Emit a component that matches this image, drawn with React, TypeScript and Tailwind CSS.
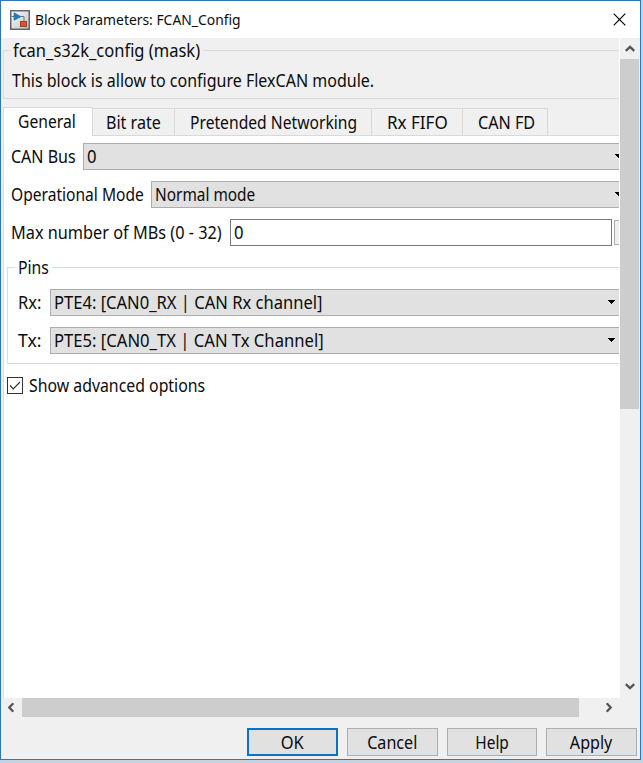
import type { ReactNode } from "react";

function Label({ children, className = "" }: { children: ReactNode; className?: string }) {
  return <span className={`block shrink-0 origin-left whitespace-pre ${className}`}>{children}</span>;
}

function DownArrow() {
  return (
    <svg width="7" height="4" viewBox="0 0 7 4" shapeRendering="crispEdges" className="shrink-0">
      <path d="M0 0h7v1h-1v1h-1v1h-1v1h-1v-1h-1v-1h-1v-1h-1z" fill="#000" />
    </svg>
  );
}

function Combo({ value, className = "", arrow, fit = "" }: { value: string; className?: string; arrow: string; fit?: string }) {
  return (
    <div className={`flex h-[27px] shrink-0 items-start justify-between overflow-hidden border border-r-0 border-[#adadad] bg-[#e1e1e1] pl-[3px] ${className}`}>
      <Label className={`leading-[25px] ${fit}`}>{value}</Label>
      <div className={`mt-[10px] shrink-0 ${arrow}`}>
        <DownArrow />
      </div>
    </div>
  );
}

function Chevron({ className = "" }: { className?: string }) {
  return (
    <svg width="10" height="7" viewBox="0 0 10 7" className={className}>
      <path d="M.8 5.8L5 1.8L9.2 5.8" fill="none" stroke="#555" strokeWidth="2.3" />
    </svg>
  );
}

function Tab({ children, className, fit }: { children: string; className: string; fit: string }) {
  return (
    <div className={`h-[27px] shrink-0 border-t border-r border-[#d9d9d9] bg-[#f0f0f0] leading-[27px] ${className}`}>
      <Label className={fit}>{children}</Label>
    </div>
  );
}

export default function App() {
  return (
    <div className="h-[763px] w-[643px] overflow-hidden bg-[#c3d3e2] font-['Noto_Sans',sans-serif] text-[17.5px] text-[#0c0c0c]">
      <div className="flex h-[760px] w-[641px] flex-col border border-[#2f78b5] bg-[#f0f0f0]">
        <header className="flex h-[37px] shrink-0 items-center bg-white pl-[9px]">
          <svg width="20" height="20" viewBox="0 0 20 20" className="shrink-0">
            <defs>
              <linearGradient id="tile" x1="0" y1="0" x2="1" y2="1">
                <stop offset="0" stopColor="#ffffff" />
                <stop offset="1" stopColor="#bfbfc3" />
              </linearGradient>
            </defs>
            <rect x="0.75" y="0.75" width="18.5" height="18.5" fill="url(#tile)" stroke="#62666c" strokeWidth="1.5" />
            <path d="M1.5 6.5H4M11 6.5H14V12" fill="none" stroke="#777" />
            <path d="M4 2.7L11 6.7L4 10.3Z" fill="#1c82bd" stroke="#2b6f9e" strokeWidth=".7" />
            <rect x="10.5" y="11.5" width="6" height="5" fill="#d9562c" stroke="#9c4228" />
          </svg>
          <Label className="ml-[5px] scale-x-[0.925] text-[15px]">Block Parameters: FCAN_Config</Label>
          <svg width="13" height="13" viewBox="0 0 13 13" className="mr-[14px] ml-auto">
            <path d="M.7 .7L12.3 12.3M12.3 .7L.7 12.3" stroke="#000" strokeWidth="1.15" />
          </svg>
        </header>

        <div className="flex h-[660px] shrink-0">
          <main className="w-[618px] shrink-0 overflow-hidden pl-[2px]">
            <fieldset className="mt-0 h-[61px] w-[640px] border border-[#dcdcdc] pl-[8px]">
              <legend className="ml-[-1px] h-[25px] w-[192px] pl-[2px] leading-[25px]">
                <Label className="scale-x-[0.943]">fcan_s32k_config (mask)</Label>
              </legend>
              <Label className="mt-[5px] scale-x-[0.915] leading-[25px]">This block is allow to configure FlexCAN module.</Label>
            </fieldset>

            <nav className="mt-[8px] flex h-[29px] w-[640px] items-end border-b border-[#d9d9d9]">
              <div className="mb-[-1px] h-[29px] w-[90px] shrink-0 border border-b-0 border-[#d9d9d9] bg-white pl-[14px] leading-[27px]">
                <Label className="scale-x-[0.895]">General</Label>
              </div>
              <Tab className="w-[82px] pl-[13px]" fit="scale-x-[0.92]">Bit rate</Tab>
              <Tab className="w-[197px] pl-[15px]" fit="scale-x-[0.895]">Pretended Networking</Tab>
              <Tab className="w-[91px] pl-[15px]" fit="scale-x-[0.972]">Rx FIFO</Tab>
              <Tab className="w-[85px] pl-[15px]" fit="scale-x-[0.922]">CAN FD</Tab>
            </nav>

            <section className="flex h-[562px] w-[640px] flex-col border-l border-[#dcdcdc] bg-white pt-[7px]">
              <div className="flex h-[38px] shrink-0 pl-[7px]">
                <Label className="w-[72px] scale-x-[0.915] leading-[27px]">CAN Bus</Label>
                <Combo value="0" className="w-[560px]" arrow="mr-[21px]" fit="scale-x-[0.95]" />
              </div>
              <div className="flex h-[38px] shrink-0 pl-[7px]">
                <Label className="w-[140px] scale-x-[0.89] leading-[27px]">Operational Mode</Label>
                <Combo value="Normal mode" className="w-[492px]" arrow="mr-[21px]" fit="scale-x-[0.88]" />
              </div>
              <div className="flex h-[38px] shrink-0 pl-[7px]">
                <Label className="w-[219px] scale-x-[0.93] leading-[27px]">Max number of MBs (0 - 32)</Label>
                <div className="h-[27px] w-[382px] shrink-0 border border-[#7a7a7a] bg-white pl-[3px] leading-[25px]">
                  <Label className="scale-x-[0.95]">0</Label>
                </div>
                <div className="mt-px ml-[2px] h-[25px] w-[24px] shrink-0 border border-[#adadad] bg-[#f0f0f0]" />
              </div>
              <fieldset className="ml-[3px] h-[107px] w-[660px] shrink-0 border border-[#dcdcdc] pl-[10px]">
                <legend className="ml-[-3px] h-[21px] w-[37px] pl-[3px] leading-[21px]">
                  <Label className="scale-x-[0.9]">Pins</Label>
                </legend>
                <div className="mt-[11px] flex h-[38px]">
                  <Label className="w-[32px] scale-x-[0.94] leading-[27px]">Rx:</Label>
                  <Combo value="PTE4: [CAN0_RX | CAN Rx channel]" className="w-[590px]" arrow="mr-[25px]" fit="scale-x-[0.946]" />
                </div>
                <div className="flex h-[38px]">
                  <Label className="w-[32px] leading-[27px]">Tx:</Label>
                  <Combo value="PTE5: [CAN0_TX | CAN Tx Channel]" className="w-[590px]" arrow="mr-[25px]" fit="scale-x-[0.95]" />
                </div>
              </fieldset>
              <div className="mt-[9px] flex h-[24px] shrink-0 items-center pl-[3px]">
                <svg width="16" height="17" viewBox="0 0 16 17" className="shrink-0">
                  <rect x=".5" y=".5" width="15" height="16" fill="#fff" stroke="#333" />
                  <path d="M3 8.5L6.3 12L13 5" fill="none" stroke="#333" strokeWidth="1.2" />
                </svg>
                <Label className="ml-[6px] scale-x-[0.905]">Show advanced options</Label>
              </div>
            </section>
          </main>

          <aside className="flex w-[20px] shrink-0 flex-col border-l border-white">
            <div className="flex h-[21px] items-center justify-center">
              <Chevron />
            </div>
            <div className="h-[350px] bg-[#cdcdcd]" />
            <div className="flex flex-1 items-end justify-center pb-[8px]">
              <Chevron className="rotate-180" />
            </div>
          </aside>
        </div>

        <div className="flex h-[19px] shrink-0 items-center">
          <div className="flex w-[21px] justify-center pr-[2px]">
            <Chevron className="-rotate-90" />
          </div>
          <div className="h-[19px] w-[557px] bg-[#cdcdcd]" />
          <Chevron className="ml-[25px] rotate-90" />
        </div>

        <footer className="mt-[11px] flex h-[28px] shrink-0 pl-[246px] text-center leading-[26px]">
          <button className="w-[91px] border-2 border-[#0b72c4] bg-[#e1e1e1] leading-[24px]">
            <span className="inline-block scale-x-[0.94]">OK</span>
          </button>
          <button className="ml-[9px] w-[91px] border border-[#adadad] bg-[#e1e1e1]">
            <span className="inline-block scale-x-[0.92]">Cancel</span>
          </button>
          <button className="ml-[9px] w-[90px] border border-[#adadad] bg-[#e1e1e1]">
            <span className="inline-block scale-x-[0.88]">Help</span>
          </button>
          <button className="ml-[9px] w-[91px] border border-[#adadad] bg-[#e1e1e1]">
            <span className="inline-block scale-x-[0.92]">Apply</span>
          </button>
        </footer>
      </div>
    </div>
  );
}
